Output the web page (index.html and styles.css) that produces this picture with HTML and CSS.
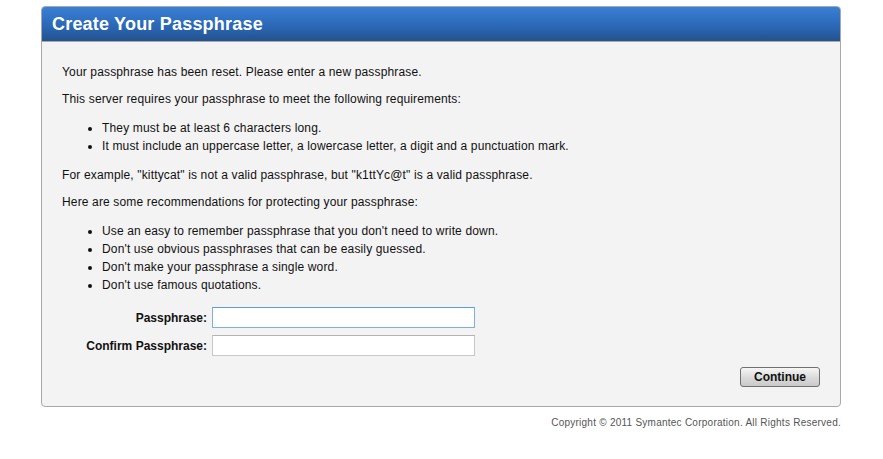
FILE: index.html
```html
<!DOCTYPE html>
<html>
<head>
<meta charset="utf-8">
<title>Create Your Passphrase</title>
<link rel="stylesheet" href="styles.css">
</head>
<body>
<div class="page">
  <div class="panel">
    <div class="panel-header"><h1 class="title">Create Your Passphrase</h1></div>
    <div class="panel-body">
      <p class="text">Your passphrase has been reset. Please enter a new passphrase.</p>
      <p class="text">This server requires your passphrase to meet the following requirements:</p>
      <ul class="list">
        <li>They must be at least 6 characters long.</li>
        <li>It must include an uppercase letter, a lowercase letter, a digit and a punctuation mark.</li>
      </ul>
      <p class="text">For example, "kittycat" is not a valid passphrase, but "k1ttYc@t" is a valid passphrase.</p>
      <p class="text">Here are some recommendations for protecting your passphrase:</p>
      <ul class="list">
        <li>Use an easy to remember passphrase that you don't need to write down.</li>
        <li>Don't use obvious passphrases that can be easily guessed.</li>
        <li>Don't make your passphrase a single word.</li>
        <li>Don't use famous quotations.</li>
      </ul>
      <div class="form">
        <div class="row">
          <label class="label" for="p1">Passphrase:</label>
          <input class="field field-focus" id="p1" type="password">
        </div>
        <div class="row">
          <label class="label" for="p2">Confirm Passphrase:</label>
          <input class="field" id="p2" type="password">
        </div>
      </div>
      <div class="actions"><button class="btn" type="button">Continue</button></div>
    </div>
  </div>
  <div class="footer">Copyright © 2011 Symantec Corporation. All Rights Reserved.</div>
</div>
</body>
</html>
```

FILE: styles.css
```css
html, body {
  margin: 0;
  padding: 0;
  background: #ffffff;
}
body {
  font-family: "Liberation Sans", Arial, sans-serif;
  font-size: 12px;
  color: #111111;
}
.page {
  width: 800px;
  margin: 6px 0 0 41px;
}
.panel {
  border: 1px solid #a9a9a9;
  border-radius: 4px;
  background: #f3f3f3;
  overflow: hidden;
}
.panel-header {
  height: 34px;
  background: linear-gradient(#3980d6, #2a66b3 60%, #24528d);
  border-bottom: 1px solid #a8a8a8;
  display: flex;
  align-items: center;
  padding-left: 10px;
}
.title {
  margin: 0;
  font-size: 18px;
  letter-spacing: 0.2px;
  font-weight: bold;
  color: #ffffff;
}
.panel-body {
  padding: 23px 20px 19px 20px;
}
.text {
  margin: 0 0 12px 0;
  line-height: 15px;
  letter-spacing: 0.15px;
}
.list {
  margin: 7px 0 13px 0;
  padding-left: 40px;
  line-height: 18px;
  letter-spacing: 0.15px;
}
.form {
  margin-top: 13px;
  display: flex;
  flex-direction: column;
  gap: 7px;
}
.row {
  display: flex;
  align-items: center;
}
.label {
  width: 145px;
  text-align: right;
  font-weight: bold;
  padding-right: 5px;
}
.field {
  box-sizing: border-box;
  width: 263px;
  height: 21px;
  margin: 0;
  border: 1px solid #c8c8c8;
  border-top-color: #b4b4b4;
  background: #ffffff;
  padding: 1px 3px;
  font-size: 12px;
  outline: none;
}
.field-focus {
  border-color: #7fb2da;
  border-top-color: #5e9ed2;
}
.actions {
  display: flex;
  justify-content: flex-end;
  margin-top: 11px;
}
.btn {
  box-sizing: border-box;
  width: 80px;
  height: 20px;
  border: 1px solid #707070;
  border-radius: 3px;
  background: linear-gradient(#f6f6f6, #dcdcdc 50%, #c9c9c9);
  font-family: "Liberation Sans", Arial, sans-serif;
  font-size: 12px;
  font-weight: bold;
  color: #111111;
  padding: 0;
}
.footer {
  text-align: right;
  font-size: 10px;
  letter-spacing: 0.25px;
  color: #555555;
  margin-top: 10px;
}
```
